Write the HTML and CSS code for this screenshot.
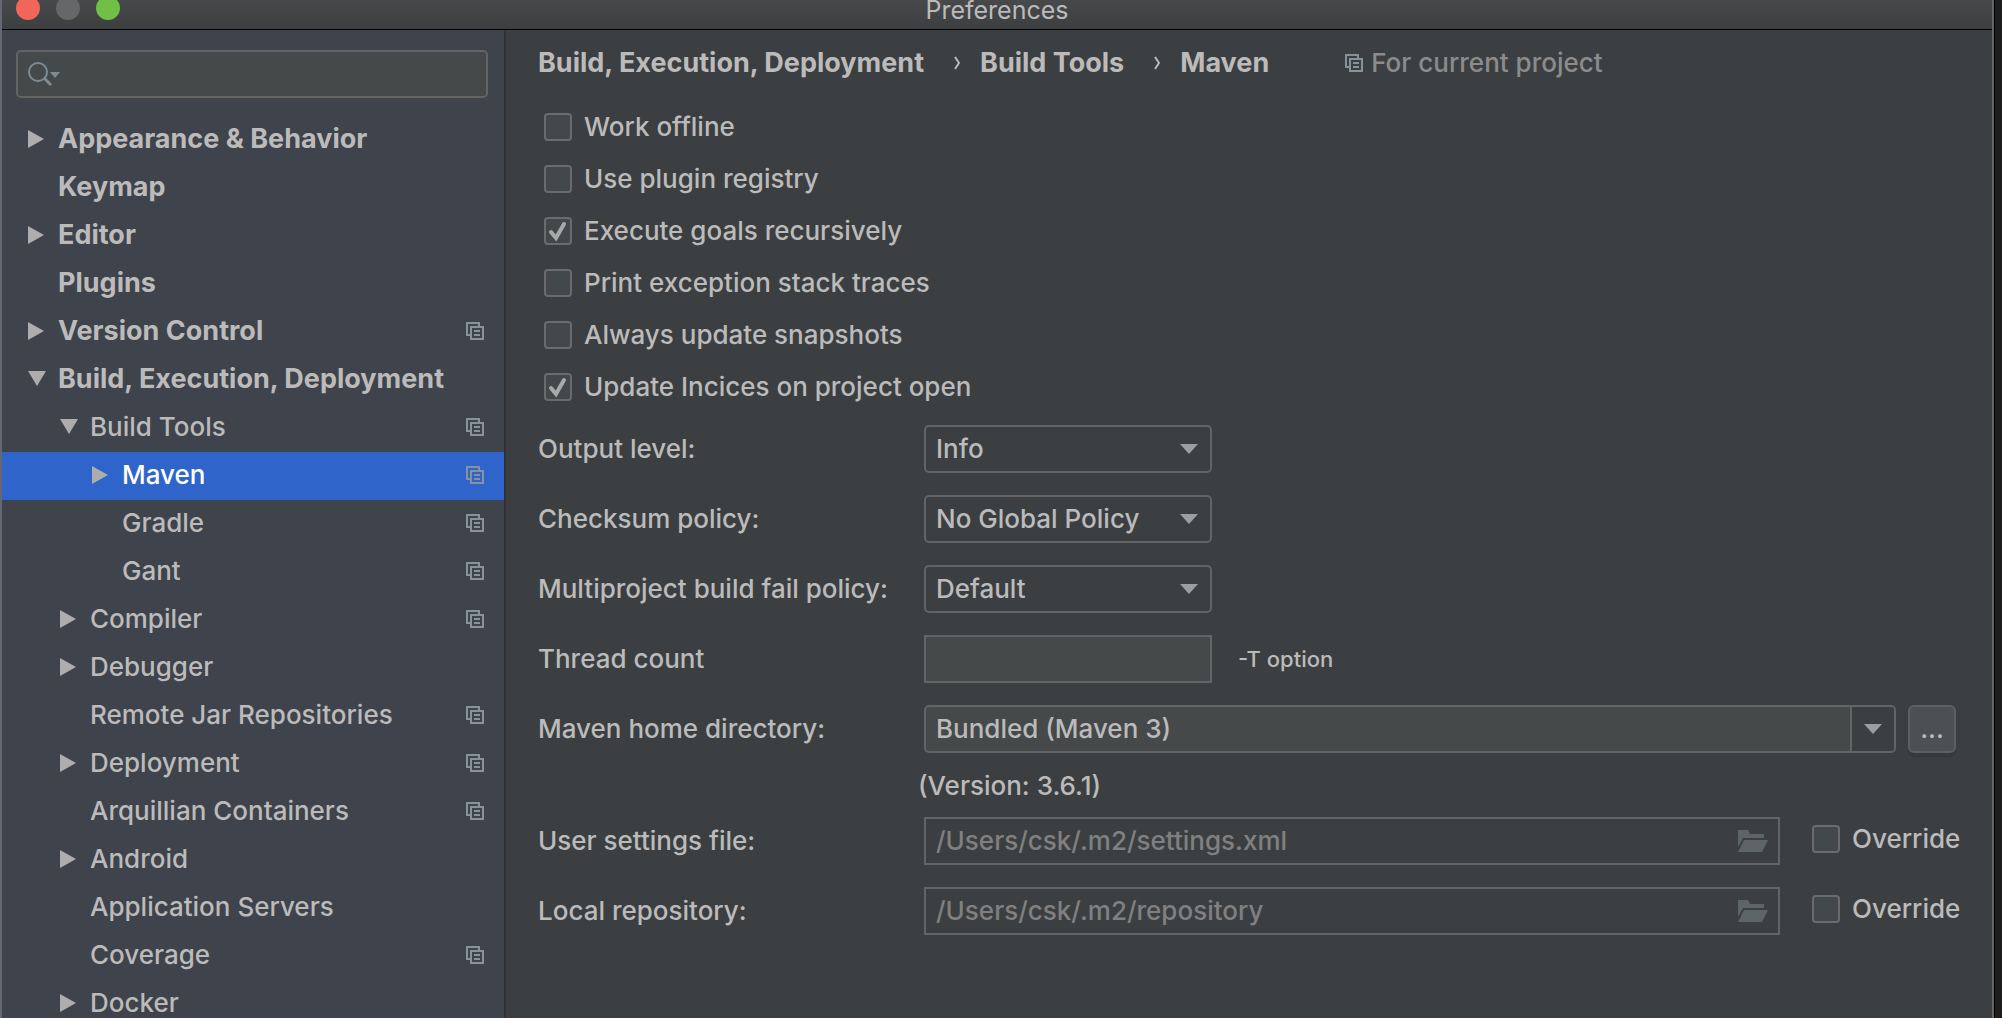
FILE: index.html
```html
<!DOCTYPE html>
<html lang="en">
<head>
<meta charset="utf-8">
<title>Preferences</title>
<link rel="stylesheet" href="styles.css">
</head>
<body>
<svg class="sprite" aria-hidden="true">
  <symbol id="project" viewBox="0 0 18 18">
    <path fill="none" stroke="currentColor" stroke-width="2" d="M13 4V1H1V13H4M5 5H17V17H5ZM8 9H14M8 13H14"/>
  </symbol>
  <symbol id="right" viewBox="0 0 18 18"><path fill="currentColor" d="M0 0L16 9L0 18Z"/></symbol>
  <symbol id="down" viewBox="0 0 18 18"><path fill="currentColor" d="M0 1H18L9 16Z"/></symbol>
  <symbol id="folder" viewBox="0 0 30 22">
    <path fill="currentColor" d="M0 0H10L12 4H26V8H5L0 17ZM6 10H30L24 22H0Z"/>
  </symbol>
</svg>
<div class="window">
  <header class="titlebar">
    <div class="lights">
      <button class="light close" aria-label="Close"></button>
      <button class="light minimize" aria-label="Minimize" disabled></button>
      <button class="light maximize" aria-label="Zoom"></button>
    </div>
    <h1 class="title">Preferences</h1>
  </header>
  <div class="content">
    <aside class="sidebar">
      <div class="search">
        <svg class="search-icon" viewBox="0 0 32 24" aria-hidden="true">
          <circle cx="10" cy="10" r="9" fill="none" stroke="currentColor" stroke-width="2"/>
          <path d="M16 16L23 23" stroke="currentColor" stroke-width="3"/>
          <path d="M22 10H32L27 16Z" fill="currentColor"/>
        </svg>
        <input class="search-input" type="text" aria-label="Search settings">
      </div>
      <nav class="tree">
        <a class="node top" href="#"><svg class="arrow"><use href="#right"/></svg><span class="name">Appearance &amp; Behavior</span></a>
        <a class="node top" href="#"><span class="arrow"></span><span class="name">Keymap</span></a>
        <a class="node top" href="#"><svg class="arrow"><use href="#right"/></svg><span class="name">Editor</span></a>
        <a class="node top" href="#"><span class="arrow"></span><span class="name">Plugins</span></a>
        <a class="node top" href="#"><svg class="arrow"><use href="#right"/></svg><span class="name">Version Control</span><svg class="scope"><use href="#project"/></svg></a>
        <a class="node top" href="#"><svg class="arrow"><use href="#down"/></svg><span class="name">Build, Execution, Deployment</span></a>
        <a class="node child" href="#"><svg class="arrow"><use href="#down"/></svg><span class="name">Build Tools</span><svg class="scope"><use href="#project"/></svg></a>
        <a class="node leaf selected" href="#" aria-current="page"><svg class="arrow"><use href="#right"/></svg><span class="name">Maven</span><svg class="scope"><use href="#project"/></svg></a>
        <a class="node leaf" href="#"><span class="arrow"></span><span class="name">Gradle</span><svg class="scope"><use href="#project"/></svg></a>
        <a class="node leaf" href="#"><span class="arrow"></span><span class="name">Gant</span><svg class="scope"><use href="#project"/></svg></a>
        <a class="node child" href="#"><svg class="arrow"><use href="#right"/></svg><span class="name">Compiler</span><svg class="scope"><use href="#project"/></svg></a>
        <a class="node child" href="#"><svg class="arrow"><use href="#right"/></svg><span class="name">Debugger</span></a>
        <a class="node child" href="#"><span class="arrow"></span><span class="name">Remote Jar Repositories</span><svg class="scope"><use href="#project"/></svg></a>
        <a class="node child" href="#"><svg class="arrow"><use href="#right"/></svg><span class="name">Deployment</span><svg class="scope"><use href="#project"/></svg></a>
        <a class="node child" href="#"><span class="arrow"></span><span class="name">Arquillian Containers</span><svg class="scope"><use href="#project"/></svg></a>
        <a class="node child" href="#"><svg class="arrow"><use href="#right"/></svg><span class="name">Android</span></a>
        <a class="node child" href="#"><span class="arrow"></span><span class="name">Application Servers</span></a>
        <a class="node child" href="#"><span class="arrow"></span><span class="name">Coverage</span><svg class="scope"><use href="#project"/></svg></a>
        <a class="node child" href="#"><svg class="arrow"><use href="#right"/></svg><span class="name">Docker</span></a>
      </nav>
    </aside>
    <main class="panel">
      <div class="crumbs">
        <span class="crumb">Build, Execution, Deployment</span>
        <svg class="chevron" viewBox="0 0 6 14" aria-hidden="true"><path d="M1 1L5 7L1 13" fill="none" stroke="currentColor" stroke-width="2"/></svg>
        <span class="crumb">Build Tools</span>
        <svg class="chevron" viewBox="0 0 6 14" aria-hidden="true"><path d="M1 1L5 7L1 13" fill="none" stroke="currentColor" stroke-width="2"/></svg>
        <span class="crumb">Maven</span>
        <span class="hint"><svg class="scope"><use href="#project"/></svg>For current project</span>
      </div>
      <div class="checks">
        <label class="check"><input class="box" type="checkbox">Work offline</label>
        <label class="check"><input class="box" type="checkbox">Use plugin registry</label>
        <label class="check"><input class="box" type="checkbox" checked>Execute goals recursively</label>
        <label class="check"><input class="box" type="checkbox">Print exception stack traces</label>
        <label class="check"><input class="box" type="checkbox">Always update snapshots</label>
        <label class="check"><input class="box" type="checkbox" checked>Update Incices on project open</label>
      </div>
      <div class="form">
        <label for="output">Output level:</label>
        <div class="field"><select id="output" class="control short combo"><option>Info</option></select></div>
        <label for="checksum">Checksum policy:</label>
        <div class="field"><select id="checksum" class="control short combo"><option>No Global Policy</option></select></div>
        <label for="fail">Multiproject build fail policy:</label>
        <div class="field"><select id="fail" class="control short combo"><option>Default</option></select></div>
        <label for="threads">Thread count</label>
        <div class="field"><input id="threads" class="control short" type="text"><span class="note">-T option</span></div>
        <label for="home">Maven home directory:</label>
        <div class="field home">
          <div class="control editable">
            <input id="home" class="bare" type="text" value="Bundled (Maven 3)">
            <button class="drop" aria-label="Show choices"><svg class="drop-arrow" viewBox="0 0 18 10"><path d="M0 0H18L9 10Z" fill="currentColor"/></svg></button>
          </div>
          <button class="browse" aria-label="Browse">...</button>
        </div>
      </div>
      <p class="version">(Version: 3.6.1)</p>
      <div class="form">
        <label for="settings">User settings file:</label>
        <div class="field paths">
          <div class="control path"><input id="settings" class="bare" type="text" value="/Users/csk/.m2/settings.xml" disabled><svg class="folder"><use href="#folder"/></svg></div>
          <label class="check override"><input class="box" type="checkbox">Override</label>
        </div>
        <label for="repository">Local repository:</label>
        <div class="field paths">
          <div class="control path"><input id="repository" class="bare" type="text" value="/Users/csk/.m2/repository" disabled><svg class="folder"><use href="#folder"/></svg></div>
          <label class="check override"><input class="box" type="checkbox">Override</label>
        </div>
      </div>
    </main>
  </div>
</div>
</body>
</html>
```
FILE: styles.css
```css
* { box-sizing: border-box; }

body {
  margin: 0;
  height: 100vh;
  overflow: hidden;
  padding-right: 8px;
  background: #1d1d1d;
  color: #bbbbbb;
  font: 500 26px/32px Inter, "Liberation Sans", sans-serif;
}

button, input, select { font: inherit; color: inherit; margin: 0; }

.sprite { display: none; }

.window {
  display: flex;
  flex-direction: column;
  height: 100%;
  border-left: 2px solid #646872;
  border-right: 2px solid #656768;
  box-shadow: 1px 0 #000000;
  background: #3c3f41;
}

.titlebar {
  display: grid;
  grid-template-columns: 1fr auto 1fr;
  flex: none;
  height: 30px;
  border-bottom: 1px solid #000000;
  background: linear-gradient(#48494b, #3d3e3f);
}

.lights { display: flex; align-items: flex-end; gap: 16px; height: 20px; padding-left: 14px; }
.light { flex: none; width: 24px; height: 24px; padding: 0; border: 0; border-radius: 50%; }
.close { background: #f0665a; }
.minimize { background: #666768; }
.maximize { background: #70c047; }

.title { margin: 0; font-size: 25px; line-height: 20px; font-weight: 400; }

.content { display: flex; flex: 1; min-height: 0; }

.sidebar {
  flex: none;
  width: 504px;
  padding-top: 20px;
  overflow: hidden;
  border-right: 2px solid #323232;
  background: #3f434c;
}

.search {
  display: flex;
  align-items: center;
  height: 48px;
  margin: 0 16px 18px 14px;
  padding: 0 10px;
  border: 2px solid #646464;
  border-radius: 5px;
  background: #45494a;
}
.search-icon { flex: none; width: 32px; height: 24px; color: #7c8b94; }
.search-input { flex: 1; min-width: 0; border: 0; outline: 0; background: none; }

.node {
  display: flex;
  align-items: center;
  height: 48px;
  padding-right: 20px;
  padding-bottom: 2px;
  color: inherit;
  text-decoration: none;
  white-space: nowrap;
}
.top { padding-left: 26px; font-size: 27px; font-weight: 700; }
.child { padding-left: 58px; }
.leaf { padding-left: 90px; }
.selected { background: #2f65ca; color: #ffffff; }
.arrow { flex: none; width: 18px; height: 18px; margin-right: 12px; color: #adadad; }
.name { flex: 1; }
.scope { flex: none; width: 18px; height: 18px; color: #87939a; }

.panel { flex: 1; min-width: 0; padding: 17px 32px 0 32px; }

.crumbs { display: flex; align-items: center; font-size: 27px; font-weight: 700; white-space: nowrap; }
.chevron { flex: none; width: 6px; height: 14px; margin: 0 20px 0 30px; }
.hint { display: flex; align-items: center; gap: 8px; margin-left: 76px; color: #8c8c8c; font-size: 26px; font-weight: 500; }

.checks { margin: 22px 0 12px 6px; }
.check { display: flex; align-items: center; gap: 12px; height: 52px; white-space: nowrap; }

.box {
  flex: none;
  appearance: none;
  width: 28px;
  height: 28px;
  border: 2px solid #6b6b6b;
  border-radius: 4px;
  background: #43494a center / 24px 24px no-repeat;
}
.box:checked {
  background-image: url("data:image/svg+xml,%3Csvg xmlns='http://www.w3.org/2000/svg' viewBox='0 0 24 24'%3E%3Cpath d='M5 13L10 19L18 5' fill='none' stroke='%23a9a9a9' stroke-width='4' stroke-linecap='round'/%3E%3C/svg%3E");
}

.form {
  display: grid;
  grid-template-columns: 386px 1fr;
  row-gap: 22px;
  align-items: center;
}
.field { display: flex; align-items: center; min-width: 0; }

.control {
  height: 48px;
  padding: 0 10px;
  border: 2px solid #646464;
  border-radius: 0;
  background: #45494a;
  outline: 0;
}
.short { width: 288px; }
.combo {
  appearance: none;
  border-radius: 5px;
  background: #3c3f41 url("data:image/svg+xml,%3Csvg xmlns='http://www.w3.org/2000/svg' viewBox='0 0 18 10'%3E%3Cpath d='M0 0H18L9 10Z' fill='%239c9fa1'/%3E%3C/svg%3E") right 12px center / 18px 10px no-repeat;
}
.note { margin-left: 26px; font-size: 22px; }

.home { gap: 12px; padding-right: 4px; }
.editable { display: flex; flex: 1; min-width: 0; padding-right: 0; border-radius: 5px; }
.bare { flex: 1; min-width: 0; padding: 0; border: 0; outline: 0; background: none; }
.drop {
  display: flex;
  align-items: center;
  justify-content: center;
  width: 44px;
  padding: 0;
  border: 0;
  border-left: 2px solid #646464;
  border-radius: 0 3px 3px 0;
  background: #3c3f41;
}
.drop-arrow { width: 18px; height: 10px; color: #9c9fa1; }
.browse {
  width: 48px;
  height: 48px;
  padding: 0;
  border: 2px solid #5e6060;
  border-radius: 6px;
  background: #4c5052;
  box-shadow: 0 4px #37393a;
}

.version { margin: 17px 0 15px 380px; }

.paths { justify-content: space-between; gap: 32px; }
.path { display: flex; align-items: center; flex: 1; min-width: 0; background: #3c3f41; }
.bare:disabled { color: #808080; }
.folder { flex: none; width: 30px; height: 22px; color: #5d6567; }
.override { width: 148px; height: 48px; padding-bottom: 4px; }
```
